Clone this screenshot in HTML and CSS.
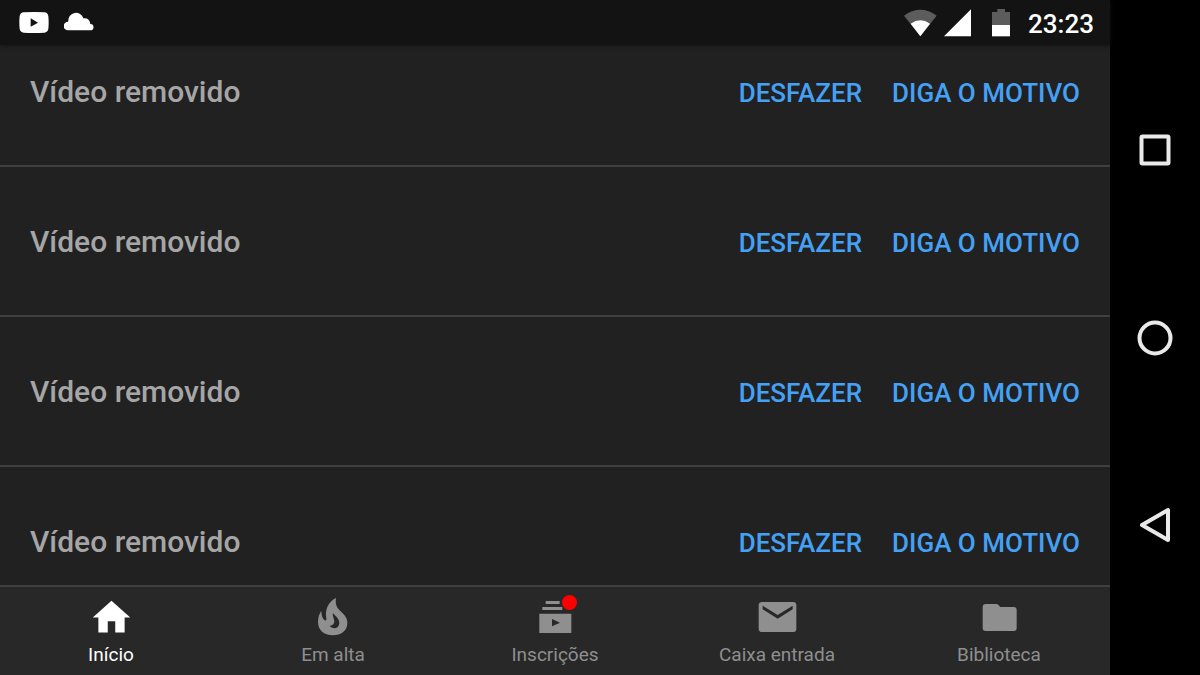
FILE: index.html
```html
<!DOCTYPE html>
<html lang="pt-BR">
<head>
<meta charset="utf-8">
<meta name="viewport" content="width=device-width, initial-scale=1">
<title>Início</title>
<link rel="stylesheet" href="styles.css">
</head>
<body>
<div class="app">
  <header class="status">
    <div class="notices">
      <svg width="30" height="22" viewBox="0 0 90 66" aria-hidden="true"><path fill="#fff" fill-rule="evenodd" d="M14 1Q45 -1 76 1Q86 2 88 12Q90 31 88 51Q86 61 76 62Q45 64 14 62Q4 61 2 51Q0 31 2 12Q4 2 14 1ZM35 19V44L57 32Z"/></svg>
      <svg width="30" height="22" viewBox="0 0 90 66" aria-hidden="true"><path fill="#fff" d="M12 55A13 13 0 0 1 12 29L13 27A23 23 0 0 1 58 19Q77 17 79 36A9.500 9.500 0 0 1 79 55Z"/></svg>
    </div>
    <div class="indicators">
      <svg class="wifi" width="33" height="28" viewBox="0 0 99 84" aria-hidden="true"><path fill="#5c5c5c" d="M0 20Q49 -15 98 20L49 82Z"/><path fill="#fff" d="M20 44Q49 24 78 44L49 82Z"/></svg>
      <svg class="signal" width="27" height="28" viewBox="0 0 81 84" aria-hidden="true"><path fill="#fff" d="M81 1V82H0Z"/></svg>
      <svg class="battery" width="18" height="28" viewBox="0 0 54 84" aria-hidden="true"><path fill="#5c5c5c" d="M16 0H39V9H54V49H0V9H16Z"/><path fill="#fff" d="M0 48H54V82H0Z"/></svg>
      <time>23:23</time>
    </div>
  </header>
  <main class="feed">
    <ul class="rows">
      <li class="row"><span class="message">Vídeo removido</span><button class="action" type="button">DESFAZER</button><button class="action" type="button">DIGA O MOTIVO</button></li>
      <li class="row"><span class="message">Vídeo removido</span><button class="action" type="button">DESFAZER</button><button class="action" type="button">DIGA O MOTIVO</button></li>
      <li class="row"><span class="message">Vídeo removido</span><button class="action" type="button">DESFAZER</button><button class="action" type="button">DIGA O MOTIVO</button></li>
      <li class="row"><span class="message">Vídeo removido</span><button class="action" type="button">DESFAZER</button><button class="action" type="button">DIGA O MOTIVO</button></li>
    </ul>
  </main>
  <nav class="tabs" aria-label="Principal">
    <a class="tab current" href="#inicio" aria-current="page">
      <svg class="icon" viewBox="0 0 24 24" aria-hidden="true"><path d="M10 20v-6h4v6h5v-8h3L12 3 2 12h3v8z"/></svg>
      <span>Início</span>
    </a>
    <a class="tab" href="#em-alta">
      <svg class="icon" viewBox="0 0 135 135" aria-hidden="true"><path fill-rule="evenodd" d="M75 9C72 29 78 38 88 48C101 60 109 68 109 84C109 107 91 121 65 121C39 121 21 105 21 81C21 67 25 56 31 47C31 59 34 71 41 76C45 78 47 75 46 70C41 43 52 20 75 9ZM66 54C63 66 73 74 69 84C67 90 62 91 56 93C62 100 73 102 80 96C88 88 85 78 80 70C77 64 70 61 66 54Z"/></svg>
      <span>Em alta</span>
    </a>
    <a class="tab" href="#inscricoes">
      <span class="badged">
        <svg class="icon" viewBox="0 0 135 135" aria-hidden="true"><path fill-rule="evenodd" d="M38 18H80V27H38ZM28 36H88V45H28ZM19 56H115V114H19ZM57 72V94L81 83Z"/></svg>
        <span class="dot"></span>
      </span>
      <span>Inscrições</span>
    </a>
    <a class="tab" href="#caixa">
      <svg class="icon" viewBox="0 0 135 135" aria-hidden="true"><path fill-rule="evenodd" d="M22 21H114Q124 21 124 31V101Q124 111 114 111H22Q11 111 11 101V31Q11 21 22 21ZM23 32V43L68 71L113 43V32L68 60Z"/></svg>
      <span>Caixa entrada</span>
    </a>
    <a class="tab" href="#biblioteca">
      <svg class="icon" viewBox="0 0 135 135" aria-hidden="true"><path d="M26 27H58Q62 27 65 31L70 36H110Q119 36 119 45V99Q119 108 110 108H26Q17 108 17 99V36Q17 27 26 27Z"/></svg>
      <span>Biblioteca</span>
    </a>
  </nav>
</div>
<aside class="system">
  <button type="button" aria-label="Recentes"><svg width="36" height="36" viewBox="0 0 36 36" aria-hidden="true"><rect x="4.5" y="4.5" width="27" height="27" rx="1"/></svg></button>
  <button type="button" aria-label="Tela inicial"><svg width="36" height="36" viewBox="0 0 36 36" aria-hidden="true"><circle cx="18" cy="18" r="15.5"/></svg></button>
  <button type="button" aria-label="Voltar"><svg width="36" height="36" viewBox="0 0 36 36" aria-hidden="true"><path d="M31 3V33L5 18Z"/></svg></button>
</aside>
</body>
</html>
```
FILE: styles.css
```css
* {
  box-sizing: border-box;
}

body {
  margin: 0;
  height: 100vh;
  display: flex;
  overflow: hidden;
  background: #000;
  font-family: Roboto, "Liberation Sans", sans-serif;
}

button {
  padding: 0;
  border: 0;
  background: none;
  font: inherit;
  cursor: pointer;
}

svg {
  display: block;
}

.app {
  flex: 1;
  min-width: 0;
  display: flex;
  flex-direction: column;
  background: #212121;
}

.status {
  flex: none;
  height: 45px;
  padding: 0 16px 0 19px;
  display: flex;
  align-items: center;
  justify-content: space-between;
  background: #131313;
  box-shadow: 0 1px 4px #131313;
  z-index: 1;
}

.notices,
.indicators {
  display: flex;
  align-items: center;
}

.notices {
  gap: 15px;
}

.signal {
  margin-left: 7px;
}

.battery {
  margin: 0 18px 0 21px;
}

time {
  padding-top: 2px;
  color: #fff;
  font-size: 26px;
  font-weight: 500;
  line-height: 30px;
}

.feed {
  flex: 1;
  min-height: 0;
  overflow: hidden;
}

/* The list is scrolled a little past its first row's top edge. */
.rows {
  margin: -28px 0 0;
  padding: 0;
  list-style: none;
}

.row {
  height: 150px;
  padding: 57px 30px 0;
  display: flex;
  align-items: baseline;
  gap: 30px;
  border-bottom: 2px solid #404040;
}

.message {
  flex: 1;
  color: #a6a6a6;
  font-size: 30px;
  font-weight: 500;
  line-height: 36px;
}

.action {
  color: #45a1f5;
  font-size: 26px;
  font-weight: 500;
  line-height: 30px;
}

.tabs {
  flex: none;
  height: 90px;
  padding-top: 8px;
  display: flex;
  background: #282828;
  border-top: 2px solid #404040;
}

.tab {
  flex: 1;
  display: flex;
  flex-direction: column;
  align-items: center;
  gap: 3px;
  color: #8f8f8f;
  font-size: 19px;
  line-height: 24px;
  text-decoration: none;
}

.current {
  color: #fff;
}

.icon {
  width: 45px;
  height: 45px;
  fill: currentColor;
}

.badged {
  position: relative;
}

.dot {
  position: absolute;
  top: 0;
  right: 1px;
  width: 15px;
  height: 15px;
  border-radius: 50%;
  background: #f00;
}

.system {
  flex: none;
  width: 90px;
  padding: 56px 0;
  display: flex;
  flex-direction: column;
}

.system button {
  flex: 1;
  display: grid;
  place-items: center;
}

.system svg {
  fill: none;
  stroke: #e9e9e9;
  stroke-width: 4;
  stroke-linejoin: round;
}
```
